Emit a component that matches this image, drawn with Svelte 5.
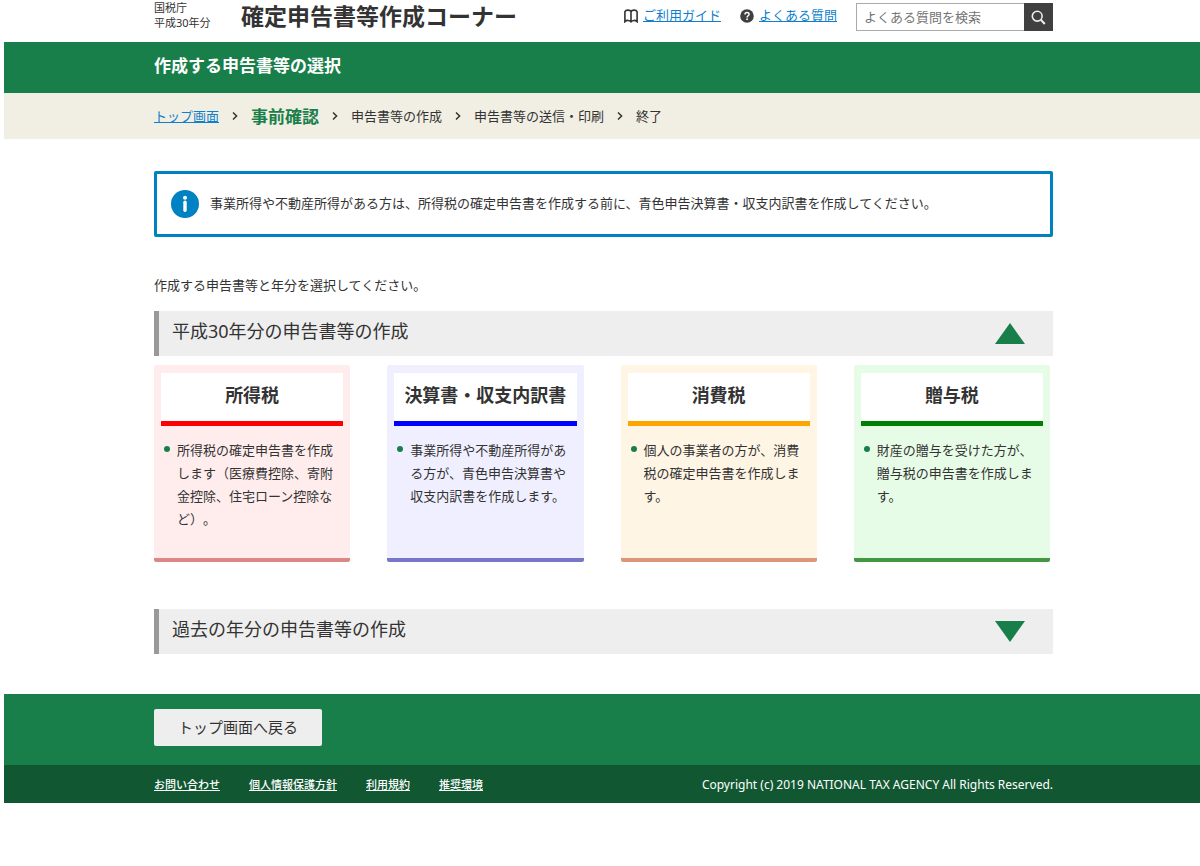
<script>
	let openCurrent = $state(true);
	let openPast = $state(false);
	let keyword = $state('');

	const steps = ['申告書等の作成', '申告書等の送信・印刷', '終了'];

	const cards = [
		{
			id: 'income',
			title: '所得税',
			text: '所得税の確定申告書を作成します（医療費控除、寄附金控除、住宅ローン控除など）。'
		},
		{
			id: 'statement',
			title: '決算書・収支内訳書',
			text: '事業所得や不動産所得がある方が、青色申告決算書や収支内訳書を作成します。'
		},
		{
			id: 'consumption',
			title: '消費税',
			text: '個人の事業者の方が、消費税の確定申告書を作成します。'
		},
		{
			id: 'gift',
			title: '贈与税',
			text: '財産の贈与を受けた方が、贈与税の申告書を作成します。'
		}
	];

	const footerLinks = ['お問い合わせ', '個人情報保護方針', '利用規約', '推奨環境'];
</script>

{#snippet chevron()}
	<svg class="chevron" viewBox="0 0 6 10" aria-hidden="true">
		<path d="M1 1.5 L4.6 5 L1 8.5" fill="none" stroke="#333" stroke-width="1.5" />
	</svg>
{/snippet}

<div class="page" lang="ja">
	<header class="container header">
		<p class="agency">国税庁<br />平成30年分</p>
		<h1>確定申告書等作成コーナー</h1>
		<nav class="help">
			<a href="#guide">
				<svg class="book" viewBox="0 0 14 14" aria-hidden="true">
					<path
						d="M7 2.8 C6.2 0.6 1.6 0.6 0.9 2.8 V12.6 C2.4 11 5.6 11 7 12.8 C8.4 11 11.6 11 13.1 12.6 V2.8 C12.4 0.6 7.8 0.6 7 2.8 Z M7 2.8 V12.8"
						fill="none"
						stroke="#333"
						stroke-width="1.6"
					/>
				</svg>
				<span>ご利用ガイド</span>
			</a>
			<a href="#faq">
				<svg class="question" viewBox="0 0 14 14" aria-hidden="true">
					<circle cx="7" cy="7" r="6.8" fill="#404040" />
					<path
						d="M5 5.5 C5 2.8 9.1 2.8 9.1 5.3 C9.1 6.8 7.1 6.8 7.1 8.5"
						fill="none"
						stroke="#fff"
						stroke-width="1.5"
					/>
					<rect x="6.3" y="9.4" width="1.6" height="1.6" fill="#fff" />
				</svg>
				<span>よくある質問</span>
			</a>
		</nav>
		<form class="search" onsubmit={(e) => e.preventDefault()}>
			<input
				type="text"
				bind:value={keyword}
				placeholder="よくある質問を検索"
				aria-label="よくある質問を検索"
			/>
			<button type="submit" aria-label="検索">
				<svg viewBox="0 0 15 15" aria-hidden="true">
					<circle cx="6.2" cy="6.2" r="4.9" fill="none" stroke="#eee" stroke-width="1.6" />
					<path d="M9.8 9.8 L13.8 14" stroke="#eee" stroke-width="2" />
				</svg>
			</button>
		</form>
	</header>

	<div class="title-band">
		<div class="container">
			<h2>作成する申告書等の選択</h2>
		</div>
	</div>

	<nav class="steps">
		<ol class="container">
			<li><a href="#top">トップ画面</a></li>
			<li>{@render chevron()}<strong aria-current="step">事前確認</strong></li>
			{#each steps as step}
				<li>{@render chevron()}{step}</li>
			{/each}
		</ol>
	</nav>

	<main class="container">
		<div class="notice">
			<svg viewBox="0 0 28 28" aria-hidden="true">
				<circle cx="14" cy="14" r="14" fill="#0081c2" />
				<circle cx="14" cy="7.7" r="2" fill="#fff" />
				<path d="M14 12.3 V20.3" stroke="#fff" stroke-width="3.4" stroke-linecap="round" />
			</svg>
			<p>
				事業所得や不動産所得がある方は、所得税の確定申告書を作成する前に、青色申告決算書・収支内訳書を作成してください。
			</p>
		</div>

		<p class="lead">作成する申告書等と年分を選択してください。</p>

		<section class="current">
			<h3>
				<button
					class="accordion"
					aria-expanded={openCurrent}
					onclick={() => (openCurrent = !openCurrent)}
				>
					<span>平成30年分の申告書等の作成</span>
					<svg class:up={openCurrent} viewBox="0 0 30 21" aria-hidden="true">
						<path d="M0 0 H30 L15 21 Z" fill="#197f4a" />
					</svg>
				</button>
			</h3>
			{#if openCurrent}
				<div class="cards">
					{#each cards as card (card.id)}
						<a class="card {card.id}" href="#{card.id}">
							<h4>{card.title}</h4>
							<ul>
								<li>{card.text}</li>
							</ul>
						</a>
					{/each}
				</div>
			{/if}
		</section>

		<section>
			<h3>
				<button class="accordion" aria-expanded={openPast} onclick={() => (openPast = !openPast)}>
					<span>過去の年分の申告書等の作成</span>
					<svg class:up={openPast} viewBox="0 0 30 21" aria-hidden="true">
						<path d="M0 0 H30 L15 21 Z" fill="#197f4a" />
					</svg>
				</button>
			</h3>
		</section>
	</main>

	<div class="back-band">
		<div class="container">
			<button type="button">トップ画面へ戻る</button>
		</div>
	</div>

	<footer>
		<div class="container">
			<ul>
				{#each footerLinks as link}
					<li><a href="#footer">{link}</a></li>
				{/each}
			</ul>
			<small>Copyright (c) 2019 NATIONAL TAX AGENCY All Rights Reserved.</small>
		</div>
	</footer>
</div>

<style>
	:global(body) {
		margin: 0;
		background: #fff;
	}
	.page {
		margin-left: 4px;
		color: #333;
		font-family: 'Noto Sans', 'Noto Sans CJK JP', sans-serif;
		font-size: 13px;
		line-height: 23px;
		text-spacing-trim: space-all;
	}
	.page * {
		box-sizing: border-box;
	}
	h1,
	h2,
	h3,
	h4,
	p,
	ul,
	ol {
		margin: 0;
		padding: 0;
	}
	ul,
	ol {
		list-style: none;
	}
	button,
	input {
		margin: 0;
		border: 0;
		border-radius: 0;
		color: inherit;
		font: inherit;
	}
	button {
		cursor: pointer;
	}
	svg {
		display: block;
		flex: none;
	}
	a {
		color: #0f7fcc;
	}
	.container {
		max-width: 902px;
		margin: 0 auto;
		padding-left: 3px;
	}

	.header {
		display: flex;
		align-items: flex-start;
		height: 42px;
	}
	.agency {
		width: 87px;
		font-size: 11px;
		line-height: 15px;
	}
	h1 {
		font-size: 23px;
		font-weight: 700;
		line-height: 32px;
	}
	.help {
		display: flex;
		gap: 19px;
		margin-left: auto;
		padding-top: 4px;
	}
	.help a {
		display: flex;
		align-items: center;
		gap: 5px;
		text-decoration: none;
	}
	.help a span {
		text-decoration: underline;
	}
	.book,
	.question {
		width: 14px;
		height: 14px;
	}
	.search {
		display: flex;
		margin-left: 19px;
		padding-top: 3px;
	}
	.search input {
		width: 168px;
		height: 28px;
		padding: 0 7px;
		border: 1px solid #aaa;
		border-right: 0;
		background: #fff;
	}
	.search input::placeholder {
		color: #757575;
		opacity: 1;
	}
	.search button {
		display: flex;
		align-items: center;
		justify-content: center;
		width: 29px;
		height: 28px;
		padding: 0;
		background: #404040;
	}
	.search svg {
		width: 15px;
		height: 15px;
	}

	.title-band {
		padding: 12px 0 15px;
		background: #197f4a;
		color: #fff;
	}
	h2 {
		font-size: 17px;
		line-height: 24px;
	}
	.steps {
		background: #f1eee3;
	}
	.steps ol {
		display: flex;
		align-items: center;
		height: 46px;
	}
	.steps li {
		display: flex;
		align-items: center;
	}
	.steps strong {
		color: #197f4a;
		font-size: 17px;
	}
	.chevron {
		width: 6px;
		height: 10px;
		margin: 0 13px;
	}

	.notice {
		display: flex;
		align-items: center;
		gap: 11px;
		margin-top: 32px;
		padding: 16px 14px;
		border: 3px solid #0081c2;
		border-radius: 2px;
	}
	.notice svg {
		width: 28px;
		height: 28px;
	}
	.notice p {
		padding-bottom: 2px;
	}
	.lead {
		margin: 37px 0 14px;
	}
	h3 {
		font-size: 18px;
		font-weight: 400;
	}
	.accordion {
		display: flex;
		align-items: center;
		justify-content: space-between;
		width: 100%;
		height: 45px;
		padding: 0 28px 0 13px;
		border-left: 5px solid #999;
		background: #eee;
		text-align: left;
	}
	.accordion span {
		padding-bottom: 4px;
	}
	.accordion svg {
		width: 30px;
		height: 21px;
	}
	.accordion .up {
		transform: rotate(180deg);
	}
	.current {
		margin-bottom: 47px;
	}
	.cards {
		display: grid;
		grid-template-columns: repeat(4, 1fr);
		gap: 37px;
		padding: 9px 3px 0 0;
	}
	.card {
		min-height: 197px;
		padding: 8px 7px;
		border-bottom: 4px solid;
		border-radius: 2px;
		color: #333;
		text-decoration: none;
	}
	h4 {
		padding: 10px 0 14px;
		border-bottom: 5px solid;
		background: #fff;
		font-size: 18px;
		line-height: 24px;
		text-align: center;
		white-space: nowrap;
	}
	.card ul {
		padding: 13px 7px 0 16px;
	}
	.card li {
		position: relative;
	}
	.card li::before {
		content: '';
		position: absolute;
		top: 7px;
		left: -13px;
		width: 6px;
		height: 6px;
		border-radius: 50%;
		background: #197f4a;
	}
	.income {
		border-color: #dc8686;
		background: #ffeded;
	}
	.income h4 {
		border-color: #f00;
	}
	.statement {
		border-color: #7676cb;
		background: #f0efff;
	}
	.statement h4 {
		border-color: #00f;
	}
	.consumption {
		border-color: #de9678;
		background: #fff5e4;
	}
	.consumption h4 {
		border-color: orange;
	}
	.gift {
		border-color: #439943;
		background: #e7fce7;
	}
	.gift h4 {
		border-color: green;
	}

	.back-band {
		margin-top: 40px;
		padding: 15px 0 19px;
		background: #197f4a;
	}
	.back-band button {
		display: block;
		width: 168px;
		height: 37px;
		border-radius: 2px;
		background: #eee;
		font-size: 15px;
	}
	footer {
		background: #115832;
		color: #fff;
	}
	footer .container {
		display: flex;
		align-items: center;
		justify-content: space-between;
		height: 38px;
	}
	footer ul {
		display: flex;
		gap: 29px;
		font-size: 11px;
		font-weight: 500;
	}
	footer a {
		color: #fff;
	}
	small {
		font-size: 12px;
	}
</style>
